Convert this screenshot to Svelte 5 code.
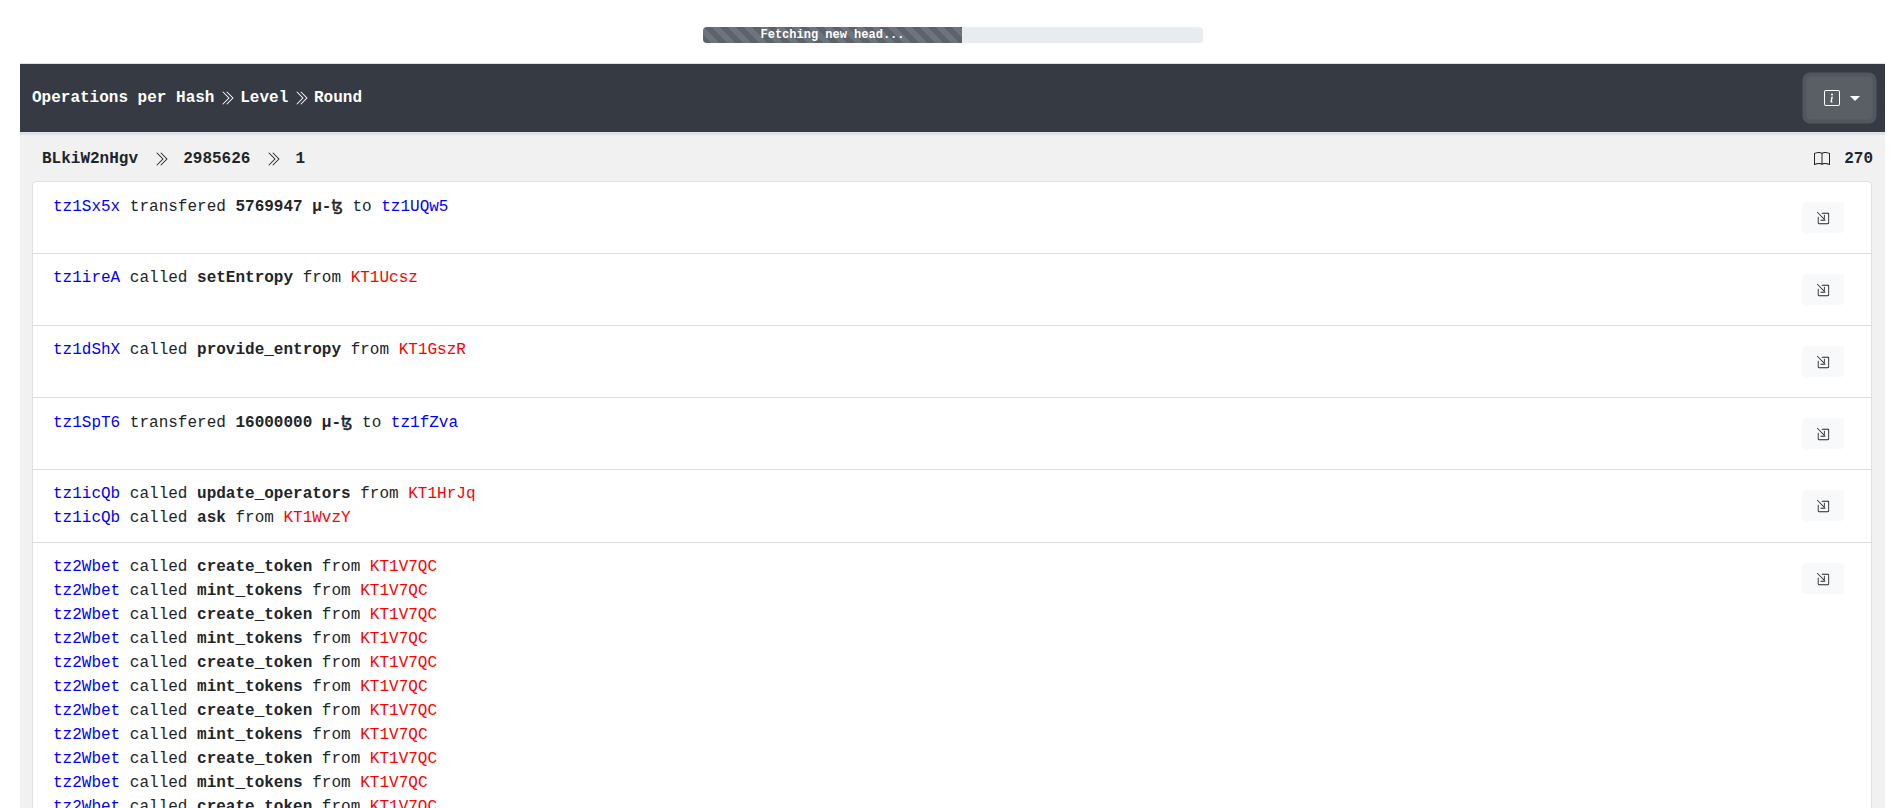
<script>
  const L = (a, m, c) => ({ a, m, c });
  const rows = [
    [{ t: 1, a: 'tz1Sx5x', v: '5769947 μ-', b: 'tz1UQw5' }],
    [L('tz1ireA', 'setEntropy', 'KT1Ucsz')],
    [L('tz1dShX', 'provide_entropy', 'KT1GszR')],
    [{ t: 1, a: 'tz1SpT6', v: '16000000 μ-', b: 'tz1fZva' }],
    [L('tz1icQb', 'update_operators', 'KT1HrJq'), L('tz1icQb', 'ask', 'KT1WvzY')],
    Array.from({ length: 13 }, (_, i) => L('tz2Wbet', i % 2 ? 'mint_tokens' : 'create_token', 'KT1V7QC'))
  ];
</script>

{#snippet chevrons()}
  <svg class="chev" viewBox="0 0 16 16" fill="currentColor" aria-hidden="true">
    <path fill-rule="evenodd" d="M3.646 1.646a.5.5 0 0 1 .708 0l6 6a.5.5 0 0 1 0 .708l-6 6a.5.5 0 0 1-.708-.708L9.293 8 3.646 2.354a.5.5 0 0 1 0-.708z"/>
    <path fill-rule="evenodd" d="M7.646 1.646a.5.5 0 0 1 .708 0l6 6a.5.5 0 0 1 0 .708l-6 6a.5.5 0 0 1-.708-.708L13.293 8 7.646 2.354a.5.5 0 0 1 0-.708z"/>
  </svg>
{/snippet}

<nav class="nav"></nav>

<div class="progress-wrap">
  <div class="progress">
    <div class="bar">Fetching new head...</div>
  </div>
</div>

<main class="card">
  <header class="head">
    <div class="crumbs">
      <span>Operations per Hash</span>
      {@render chevrons()}
      <span>Level</span>
      {@render chevrons()}
      <span>Round</span>
    </div>
    <button class="info" type="button" aria-label="Info">
      <svg viewBox="0 0 16 16" fill="currentColor" width="16" height="16" aria-hidden="true">
        <path d="M14 1a1 1 0 0 1 1 1v12a1 1 0 0 1-1 1H2a1 1 0 0 1-1-1V2a1 1 0 0 1 1-1h12zM2 0a2 2 0 0 0-2 2v12a2 2 0 0 0 2 2h12a2 2 0 0 0 2-2V2a2 2 0 0 0-2-2H2z"/>
        <path d="m8.93 6.588-2.29.287-.082.38.45.083c.294.07.352.176.288.469l-.738 3.468c-.194.897.105 1.319.808 1.319.545 0 1.178-.252 1.465-.598l.088-.416c-.2.176-.492.246-.686.246-.275 0-.375-.193-.304-.533L8.93 6.588zM9 4.5a1 1 0 1 1-2 0 1 1 0 0 1 2 0z"/>
      </svg>
      <span class="caret"></span>
    </button>
  </header>

  <section class="body">
    <div class="sub">
      <div class="path">
        <b>BLkiW2nHgv</b>
        {@render chevrons()}
        <b>2985626</b>
        {@render chevrons()}
        <b>1</b>
      </div>
      <div class="count">
        <svg viewBox="0 0 16 16" fill="currentColor" width="16" height="16" aria-hidden="true">
          <path d="M1 2.828c.885-.37 2.154-.769 3.388-.893 1.33-.134 2.458.063 3.112.752v9.746c-.935-.53-2.12-.603-3.213-.493-1.18.12-2.37.461-3.287.811V2.828zm7.5-.141c.654-.689 1.782-.886 3.112-.752 1.234.124 2.503.523 3.388.893v9.923c-.918-.35-2.107-.692-3.287-.81-1.094-.111-2.278-.039-3.213.492V2.687zM8 1.783C7.015.936 5.587.81 4.287.94c-1.514.153-3.042.672-3.994 1.105A.5.5 0 0 0 0 2.5v11a.5.5 0 0 0 .707.455c.882-.4 2.303-.881 3.68-1.02 1.409-.142 2.59.087 3.223.877a.5.5 0 0 0 .78 0c.633-.79 1.814-1.019 3.222-.877 1.378.139 2.8.62 3.681 1.02A.5.5 0 0 0 16 13.5v-11a.5.5 0 0 0-.293-.455c-.952-.433-2.48-.952-3.994-1.105C10.413.809 8.985.936 8 1.783z"/>
        </svg>
        <b>270</b>
      </div>
    </div>

    <ul class="list">
      {#each rows as row}
        <li class="item">
          <div class="lines">
            {#each row as r}
              <div>
                {#if r.t}
                  <a class="src" href="#top">{r.a}</a> transfered <b>{r.v}<span class="tez">ꜩ</span></b> to <a class="src" href="#top">{r.b}</a>
                {:else}
                  <a class="src" href="#top">{r.a}</a> called <b>{r.m}</b> from <a class="dst" href="#top">{r.c}</a>
                {/if}
              </div>
            {/each}
          </div>
          <button class="open" type="button" aria-label="Open">
            <svg viewBox="0 0 16 16" fill="currentColor" width="14" height="14" aria-hidden="true">
              <path fill-rule="evenodd" d="M6.364 2.5a.5.5 0 0 1 .5-.5H13.5A1.5 1.5 0 0 1 15 3.5v10a1.5 1.5 0 0 1-1.5 1.5h-10A1.5 1.5 0 0 1 2 13.5V6.864a.5.5 0 1 1 1 0V13.5a.5.5 0 0 0 .5.5h10a.5.5 0 0 0 .5-.5v-10a.5.5 0 0 0-.5-.5H6.864a.5.5 0 0 1-.5-.5z"/>
              <path fill-rule="evenodd" d="M11 10.5a.5.5 0 0 1-.5.5h-5a.5.5 0 0 1 0-1h3.793L1.146 1.854a.5.5 0 1 1 .708-.708L9 8.293V4.5a.5.5 0 0 1 1 0v6z"/>
            </svg>
          </button>
        </li>
      {/each}
    </ul>
  </section>
</main>

<style>
  :global(html), :global(body) {
    margin: 0;
    height: 100%;
    overflow: hidden;
    background: #fff;
  }
  :global(body) {
    font-family: "Liberation Mono", "DejaVu Sans", monospace;
    font-size: 16px;
    line-height: 24px;
    color: #212529;
  }
  .nav {
    height: 0;
    box-shadow: 0 0 10px rgba(0, 0, 0, 0.12);
  }
  .progress-wrap {
    display: flex;
    justify-content: center;
    padding: 27px 0 20px 9px;
  }
  .progress {
    width: 500px;
    height: 16px;
    background: #e9ecef;
    border-radius: 4px;
    overflow: hidden;
    display: flex;
  }
  .bar {
    width: 259px;
    color: #fff;
    font-size: 12px;
    font-weight: 700;
    line-height: 16px;
    text-align: center;
    white-space: nowrap;
    background-color: #6c757d;
    background-image: linear-gradient(45deg, rgba(0,0,0,.15) 25%, transparent 25%, transparent 50%, rgba(0,0,0,.15) 50%, rgba(0,0,0,.15) 75%, transparent 75%, transparent);
    background-size: 16px 16px;
  }
  .card {
    margin: 0 12px 0 20px;
    border-top: 1px solid #dfdfdf;
  }
  .head {
    height: 71px;
    box-sizing: border-box;
    background: #363a42;
    border-bottom: 3px solid #dfe2e7;
    display: flex;
    align-items: center;
    justify-content: space-between;
    padding: 0 12px;
    color: #fff;
  }
  .crumbs {
    display: flex;
    align-items: center;
    gap: 4.9px;
    font-weight: 700;
    margin-bottom: 1px;
  }
  .chev {
    width: 16px;
    height: 16px;
    flex: none;
  }
  .info {
    box-sizing: border-box;
    width: 67px;
    height: 44px;
    background: #5a5f66;
    border: 1px solid #565b62;
    border-radius: 4px;
    color: #fff;
    box-shadow: 0 0 0 3.5px #52565d;
    display: flex;
    align-items: center;
    gap: 10px;
    padding: 0 0 0 17px;
  }
  .caret {
    width: 0;
    height: 0;
    border-top: 5px solid #fff;
    border-left: 5px solid transparent;
    border-right: 5px solid transparent;
  }
  .body {
    background: #f1f1f1;
    padding: 0 13px 0 12px;
  }
  .sub {
    height: 46px;
    display: flex;
    align-items: center;
    justify-content: space-between;
    padding: 1px 0 0 10px;
    box-sizing: border-box;
  }
  .path, .count {
    display: flex;
    align-items: center;
  }
  .path .chev { margin: 0 14.6px; }
  .count { gap: 14px; color: #212529; margin-right: -1px; }
  .list {
    list-style: none;
    margin: 0;
    padding: 0;
    background: #fff;
    border: 1px solid #dfdfdf;
    border-radius: 4px;
  }
  .item {
    display: flex;
    justify-content: space-between;
    align-items: flex-start;
    padding: 12px 27px 12px 20px;
    border-bottom: 1px solid #dfdfdf;
  }
  .lines { white-space: nowrap; }
  .tez {
    font-family: "DejaVu Sans", sans-serif;
    font-weight: 400;
    -webkit-text-stroke: 0.45px currentColor;
  }
  .src { color: #00f; text-decoration: none; }
  .dst { color: #f00; text-decoration: none; }
  .open {
    box-sizing: border-box;
    width: 42px;
    height: 31px;
    margin: 8px 0;
    background: #f8f9fa;
    border: 1px solid #f8f9fa;
    border-radius: 3px;
    color: #212529;
    display: flex;
    align-items: center;
    justify-content: center;
    padding: 0;
  }
</style>
